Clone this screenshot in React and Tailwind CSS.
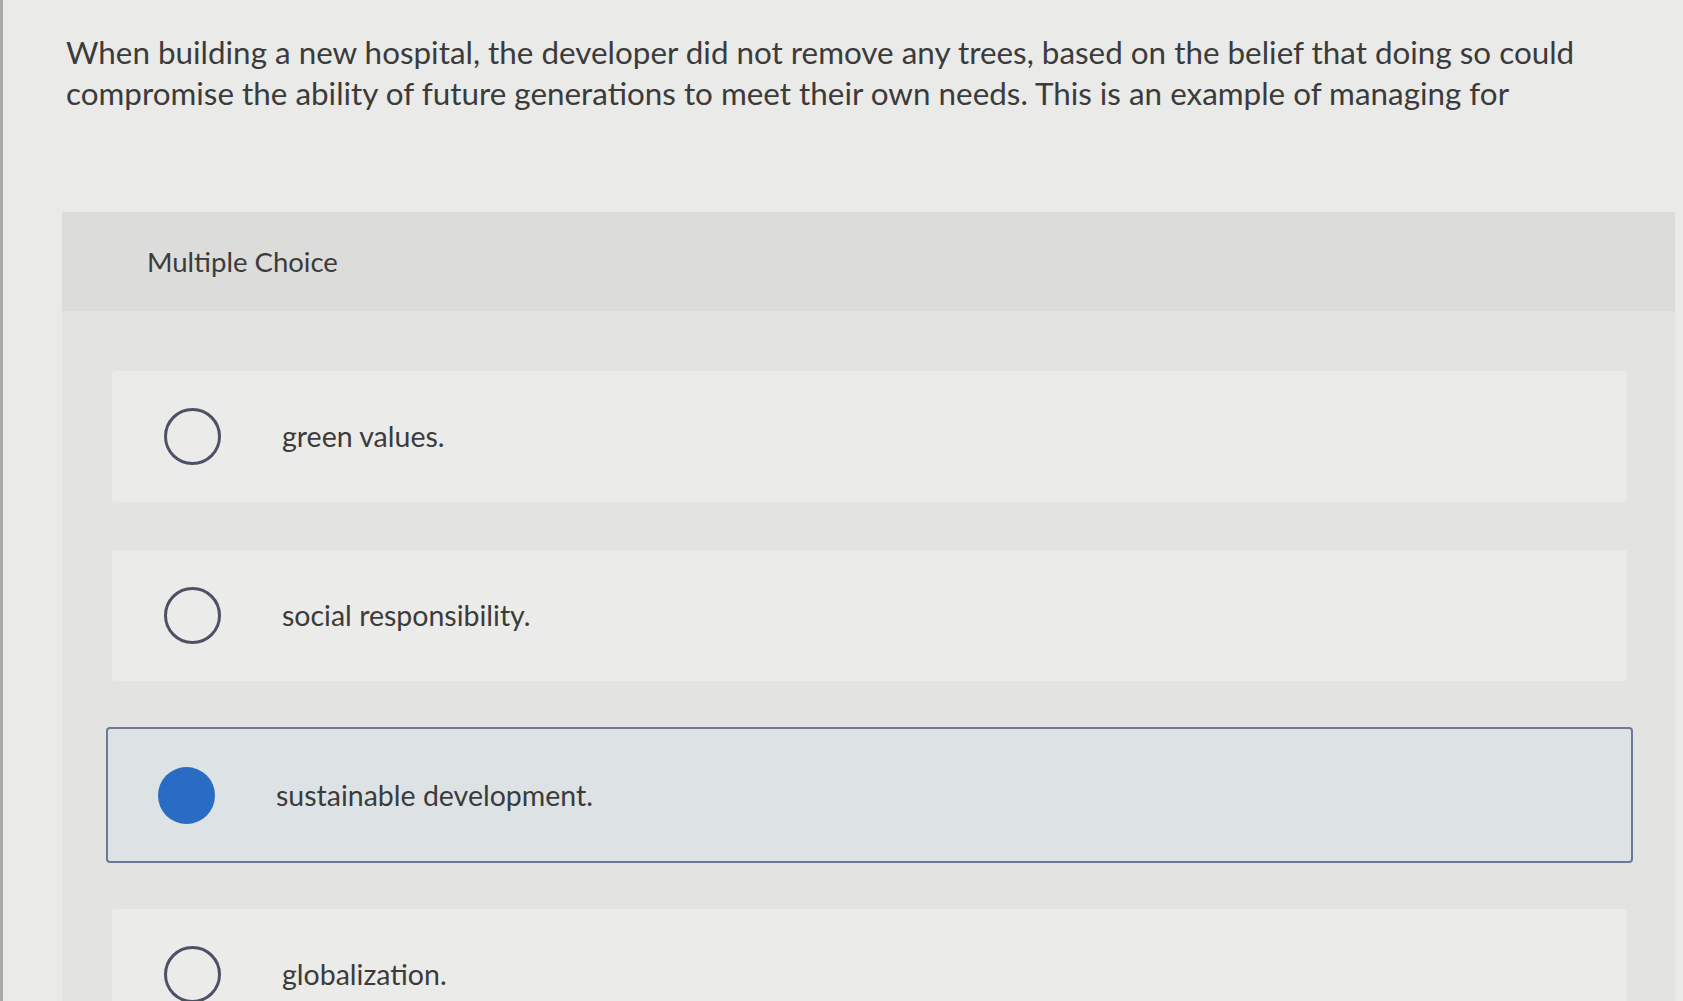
import React, { useState } from 'react';

const OPTIONS = [
  'green values.',
  'social responsibility.',
  'sustainable development.',
  'globalization.',
];

function Radio({ checked }) {
  if (checked) {
    return <span className="block w-[57px] h-[57px] shrink-0 rounded-full bg-[#2a6cc4]" />;
  }
  return <span className="block w-[57px] h-[57px] shrink-0 rounded-full border-[3px] border-[#4c5166]" />;
}

export default function App() {
  const [selected, setSelected] = useState(2);

  return (
    <div
      className="h-[1001px] overflow-hidden bg-[#eaeae8] border-l-[3px] border-[#a9a9a7] text-[#3b3b3b]"
      style={{ fontFamily: 'Lato, "Open Sans", sans-serif' }}
    >
      <p className="pl-[63px] pr-[40px] pt-[32px] text-[31.4px] leading-[41px]">
        When building a new hospital, the developer did not remove any trees, based on the belief that doing so could
        compromise the ability of future generations to meet their own needs. This is an example of managing for
      </p>

      <div className="ml-[59px] mr-[8px] mt-[98px] bg-[#e3e3e1] rounded-tr-[4px]">
        <div className="h-[99px] bg-[#dcdcda] flex items-center pl-[85px] text-[27.5px]">
          Multiple Choice
        </div>

        <div className="flex flex-col gap-[48px] pt-[60px] pb-[40px] pl-[50px] pr-[48px]">
          {OPTIONS.map((label, i) => {
            const isSel = selected === i;
            return (
              <button
                key={label}
                onClick={() => setSelected(i)}
                className={`flex items-center text-left rounded-[4px] ${
                  isSel
                    ? 'h-[136px] bg-[#dde3e5] border-2 border-[#6d7897] -mx-[6px] -my-[2px] px-[50px]'
                    : 'h-[131px] bg-[#ebebe9] border-2 border-transparent px-[50px]'
                }`}
              >
                <Radio checked={isSel} />
                <span className="ml-[61px] text-[28.5px]">{label}</span>
              </button>
            );
          })}
        </div>
      </div>
    </div>
  );
}
